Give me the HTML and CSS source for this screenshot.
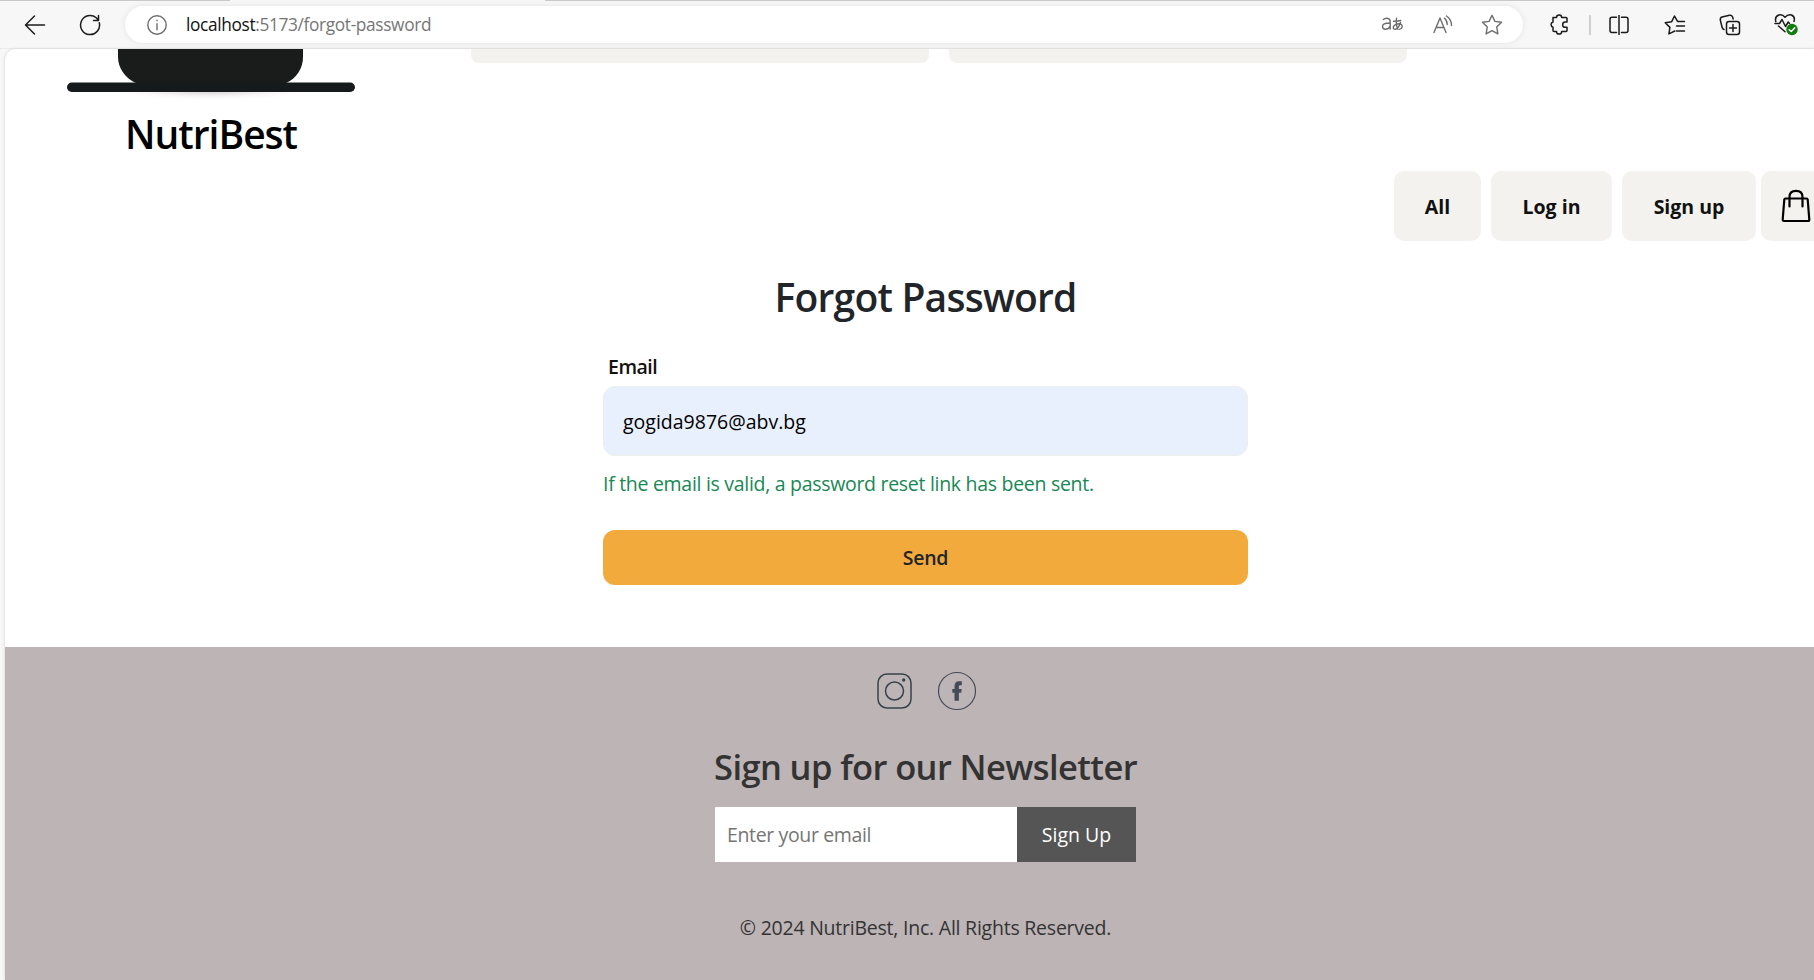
FILE: index.html
```html
<!DOCTYPE html>
<html lang="en">
<head>
<meta charset="utf-8">
<title>Forgot Password</title>
<link rel="stylesheet" href="styles.css">
</head>
<body>
<div class="toolbar">
  <div class="tab-strip"><span class="tab-edge-left"></span><span class="tab-edge-right"></span></div>
  <div class="tools">
    <svg class="back" width="22" height="22" viewBox="0 0 22 22"><path d="M20.500 11H1.500M10.500 2L1.500 11 10.500 20"/></svg>
    <svg class="reload" width="22" height="22" viewBox="0 0 22 22"><path d="M20.300 8.800A9.500 9.500 0 1 1 17.200 3.800L19.300 6M19.500 1.500v5H14.500"/></svg>
    <div class="address">
      <svg class="info" width="20" height="20" viewBox="0 0 20 20"><circle cx="10" cy="10" r="9.200"/><path d="M10 8.800v6M10 5.200v.6"/></svg>
      <div class="url"><span class="host">localhost</span>:5173/forgot-password</div>
      <svg class="translate" width="24" height="22" viewBox="0 0 24 22"><path d="M2.300 5.500Q4 4 6.200 4.200Q9.200 4.500 9.200 7.500V15M9.200 9Q1.500 9 1.500 12.200Q1.500 15.200 4.500 15.200Q8 15.200 9.200 12M12.500 7.200Q16 7.500 19.800 6.500M15.500 4.300Q14.500 10 16.500 15M19.500 8.500Q18 13.800 14.800 15.200Q12 15.400 12.300 13Q14 9.800 18 9.800Q21.500 10 21.200 12.800Q20.700 15 18 15.400"/></svg>
      <svg class="read" width="20" height="20" viewBox="0 0 20 20"><path d="M1 17.500L7 3L13 17.500M3.200 12.500H10.800M11.500 3.200Q14.200 5.500 14.200 9.500M13.500 1Q18.500 4.500 18.500 10.500"/></svg>
      <svg class="star" width="22" height="22" viewBox="0 0 22 22"><path d="M11 1.300L13.900 7.400L20.500 8.300L15.700 13L16.900 19.900L11 16.700L5.100 19.900L6.300 13L1.500 8.300L8.100 7.400Z"/></svg>
    </div>
    <svg class="puzzle" width="20" height="21" viewBox="0 0 20 21"><path d="M4 3.500H7.500A2.600 2.600 0 0 1 12.700 3.500H17Q18 3.500 18 4.500V8H16.300A2.600 2.600 0 0 0 16.300 13.300H18V16.500Q18 17.500 17 17.500H12.700A2.600 2.600 0 0 1 7.500 17.500H5Q4 17.500 4 16.500V13.200A2.700 2.700 0 0 1 4 8Z"/></svg>
    <span class="divider"></span>
    <svg class="split" width="20" height="20" viewBox="0 0 20 20"><path d="M10 0V20M7.500 2.200H3Q1 2.200 1 4.200V15.500Q1 17.500 3 17.500H7.500M12.500 2.200H17Q19 2.200 19 4.200V15.500Q19 17.500 17 17.500H12.500"/></svg>
    <svg class="favorites" width="22" height="20" viewBox="0 0 22 20"><path d="M20.500 6.400H13.500L10.500 1L7.700 6.700L1.200 7.700L5.900 12.400L4.900 18.900L10.800 16M12.500 11H20.500M12.500 16H20.500"/></svg>
    <svg class="collections" width="22" height="22" viewBox="0 0 22 22"><rect x="7.500" y="7.500" width="13" height="13" rx="2.500"/><path d="M14 10.500v7M10.500 14h7M5 15.500Q3.500 15 3 13L1.300 6Q1 3.800 3 3L10.500 1.300Q12.700 1 13.500 2.800L14.200 5"/></svg>
    <svg class="health" width="25" height="23" viewBox="0 0 25 23"><path d="M1.800 8.500Q.5 3.500 4.800 2Q8.300 1 11 4.200Q14 1 17.500 2Q21.500 3.800 20 8.500M1 10.500H5.500L8 6.500L11.500 13.500L14.200 9L15.500 10.500M4.500 13L11 18.800"/><circle class="badge" cx="18" cy="16.500" r="5.700"/><path class="tick" d="M15.200 16.700L17.300 18.500L20.800 14.700"/></svg>
  </div>
</div>

<div class="page">
  <header class="top">
    <div class="brand">
      <svg class="logo" width="288" height="54" viewBox="0 0 288 54">
        <defs>
          <radialGradient id="shade"><stop offset="0" stop-color="#888" stop-opacity=".5"/><stop offset="1" stop-color="#fff" stop-opacity="0"/></radialGradient>
        </defs>
        <ellipse cx="144" cy="41" rx="110" ry="11" fill="url(#shade)"/>
        <path d="M51 0H236V8C236 19 230 29 219 34H69C58 29 51 19 51 8Z" fill="#1a1c1b"/>
        <rect y="33.500" width="288" height="9.500" rx="4.700" fill="#151b1d"/>
      </svg>
      <div class="brand-name">NutriBest</div>
    </div>
    <div class="panel"></div>
    <div class="panel"></div>
  </header>
  <nav class="menu">
    <a class="item all">All</a>
    <a class="item login">Log in</a>
    <a class="item signup">Sign up</a>
    <a class="item cart"><svg width="30" height="34" viewBox="0 0 30 34"><path d="M4.500 9.500H25.500Q26.500 9.500 26.700 10.500L28.300 30.500Q28.300 32 27 32H3Q1.700 32 1.700 30.500L3.300 10.500Q3.500 9.500 4.500 9.500ZM8.500 17.500V8Q8.500 1.800 15 1.800Q21.500 1.800 21.500 8V17.500"/></svg></a>
  </nav>
  <main class="reset">
    <h1 class="title">Forgot Password</h1>
    <label class="label">Email</label>
    <div class="field">gogida9876@abv.bg</div>
    <p class="message">If the email is valid, a password reset link has been sent.</p>
    <div class="send">Send</div>
  </main>
  <footer class="footer">
    <div class="social">
      <svg class="insta" width="40" height="40" viewBox="0 0 40 40"><rect x="4" y="3" width="33" height="34" rx="9"/><circle cx="20.500" cy="20" r="9"/><circle class="dot" cx="29.700" cy="9" r="1.700"/></svg>
      <svg class="facebook" width="40" height="40" viewBox="0 0 40 40"><circle cx="20" cy="20" r="18.500"/><path d="M17.500 29.700V21.800H15.300V18H17.500V15.600Q17.500 10.300 22 10.300H24.800V14.200H23Q21.900 14.200 21.900 15.500V18H24.700L24.300 21.800H21.900V29.700Z"/></svg>
    </div>
    <h2 class="news-title">Sign up for our Newsletter</h2>
    <div class="news-form">
      <div class="news-input">Enter your email</div>
      <div class="news-button">Sign Up</div>
    </div>
    <p class="copyright">© 2024 NutriBest, Inc. All Rights Reserved.</p>
  </footer>
</div>
</body>
</html>
```

FILE: styles.css
```css
* { box-sizing: border-box; }
body {
  margin: 0;
  height: 980px;
  overflow: hidden;
  background: #f7f7f7;
  font-family: "Open Sans", "Noto Sans", sans-serif;
  font-size: 19.5px;
  line-height: 30px;
  color: #212529;
  white-space: nowrap;
}
h1, h2, p { margin: 0; font-weight: 600; }
svg { display: block; flex: none; fill: none; stroke: #1b1b1b; stroke-width: 1.5; stroke-linejoin: round; stroke-linecap: round; }

.toolbar { height: 49px; border-bottom: 1px solid #ececec; }
.tab-strip { display: flex; justify-content: space-between; height: 1px; }
.tab-edge-left { width: 230px; background: #c8c8c8; }
.tab-edge-right { width: 1269px; background: #c8c8c8; }
.tools { display: flex; align-items: center; height: 47px; padding-left: 24px; }
.reload { margin-left: 33px; }
.address {
  display: flex;
  align-items: center;
  width: 1398px;
  height: 37px;
  margin-left: 24px;
  padding-left: 22px;
  border-radius: 19px;
  background: #fff;
  box-shadow: 0 0 6px #e4e4e4;
}
.address svg { stroke: #6d6d6d; stroke-width: 1.4; }
.url { flex: none; width: 1184px; margin-left: 19px; font-size: 17.3px; letter-spacing: -.35px; color: #767676; }
.host { color: #111; }
.translate { margin-left: 11px; }
.read { margin-left: 28px; }
.star { margin-left: 28px; }
.puzzle { margin-left: 26px; }
.divider { width: 2px; height: 20px; margin-left: 20px; background: #cfcfcf; }
.split { margin-left: 18px; }
.favorites { margin-left: 35px; }
.collections { margin-left: 33px; }
.health { margin-left: 33px; }
.health .badge { fill: #107c10; stroke: none; }
.health .tick { stroke: #fff; }

.page {
  height: 931px;
  margin-left: 5px;
  overflow: hidden;
  border-radius: 10px 0 0 0;
  background: #fff;
  box-shadow: 0 0 3px #ccc;
}
.top { display: flex; height: 122px; padding-left: 62px; }
.brand { width: 288px; margin-right: 116px; }
.logo { stroke: none; }
.brand-name {
  margin-top: 7px;
  font-size: 39px;
  line-height: 48px;
  font-weight: 600;
  letter-spacing: -1px;
  color: #000;
  text-align: center;
}
.panel { width: 458px; height: 14px; margin-right: 20px; border-radius: 0 0 8px 8px; background: #f4f2ee; }

.menu { display: flex; height: 70px; margin-left: 1389px; }
.item {
  display: flex;
  flex: none;
  align-items: center;
  justify-content: center;
  padding-top: 2px;
  border-radius: 10px;
  background: #f4f2ee;
  font-weight: 700;
  color: #111;
}
.all { width: 87px; }
.login { width: 121px; margin-left: 10px; }
.signup { width: 134px; margin-left: 10px; }
.cart { width: 70px; margin-left: 5px; padding-top: 0; }
.cart svg { stroke: #000; stroke-width: 2.2; }

.reset { width: 645px; margin: 0 auto 62px 598px; padding-top: 32px; }
.title { font-size: 39px; line-height: 48px; letter-spacing: -.78px; text-align: center; }
.label { display: block; margin: 31px 0 4px 5px; font-weight: 600; letter-spacing: -.5px; color: #111; }
.field {
  height: 70px;
  padding-left: 19px;
  border: 1px solid #eeeeea;
  border-radius: 12px;
  background: #e8f0fe;
  line-height: 70px;
  color: #000;
}
.message { margin-top: 13px; font-weight: 400; letter-spacing: -.295px; color: #198754; }
.send {
  height: 55px;
  margin-top: 31px;
  border-radius: 12px;
  background: #f3aa3d;
  font-weight: 600;
  letter-spacing: -.3px;
  line-height: 56px;
  text-align: center;
}

.footer {
  display: flex;
  flex-direction: column;
  align-items: center;
  width: 1841px;
  height: 333px;
  padding-top: 24px;
  background: #bdb4b5;
  color: #333;
}
.social { display: flex; gap: 23px; padding-right: 1px; }
.insta { stroke: #36424a; }
.insta .dot { fill: #36424a; stroke: none; }
.facebook { stroke: #444b59; stroke-width: 1.2; }
.facebook path { fill: #444b59; stroke: none; }
.news-title { margin-top: 35px; font-size: 34.5px; line-height: 42px; letter-spacing: -.6px; }
.news-form { display: flex; height: 55px; margin-top: 19px; line-height: 55px; }
.news-input { width: 302px; padding-left: 12px; background: #fff; letter-spacing: -.36px; color: #757575; }
.news-button { width: 119px; background: #555; color: #fff; text-align: center; }
.copyright { margin-top: 51px; font-weight: 400; letter-spacing: -.23px; }
```
